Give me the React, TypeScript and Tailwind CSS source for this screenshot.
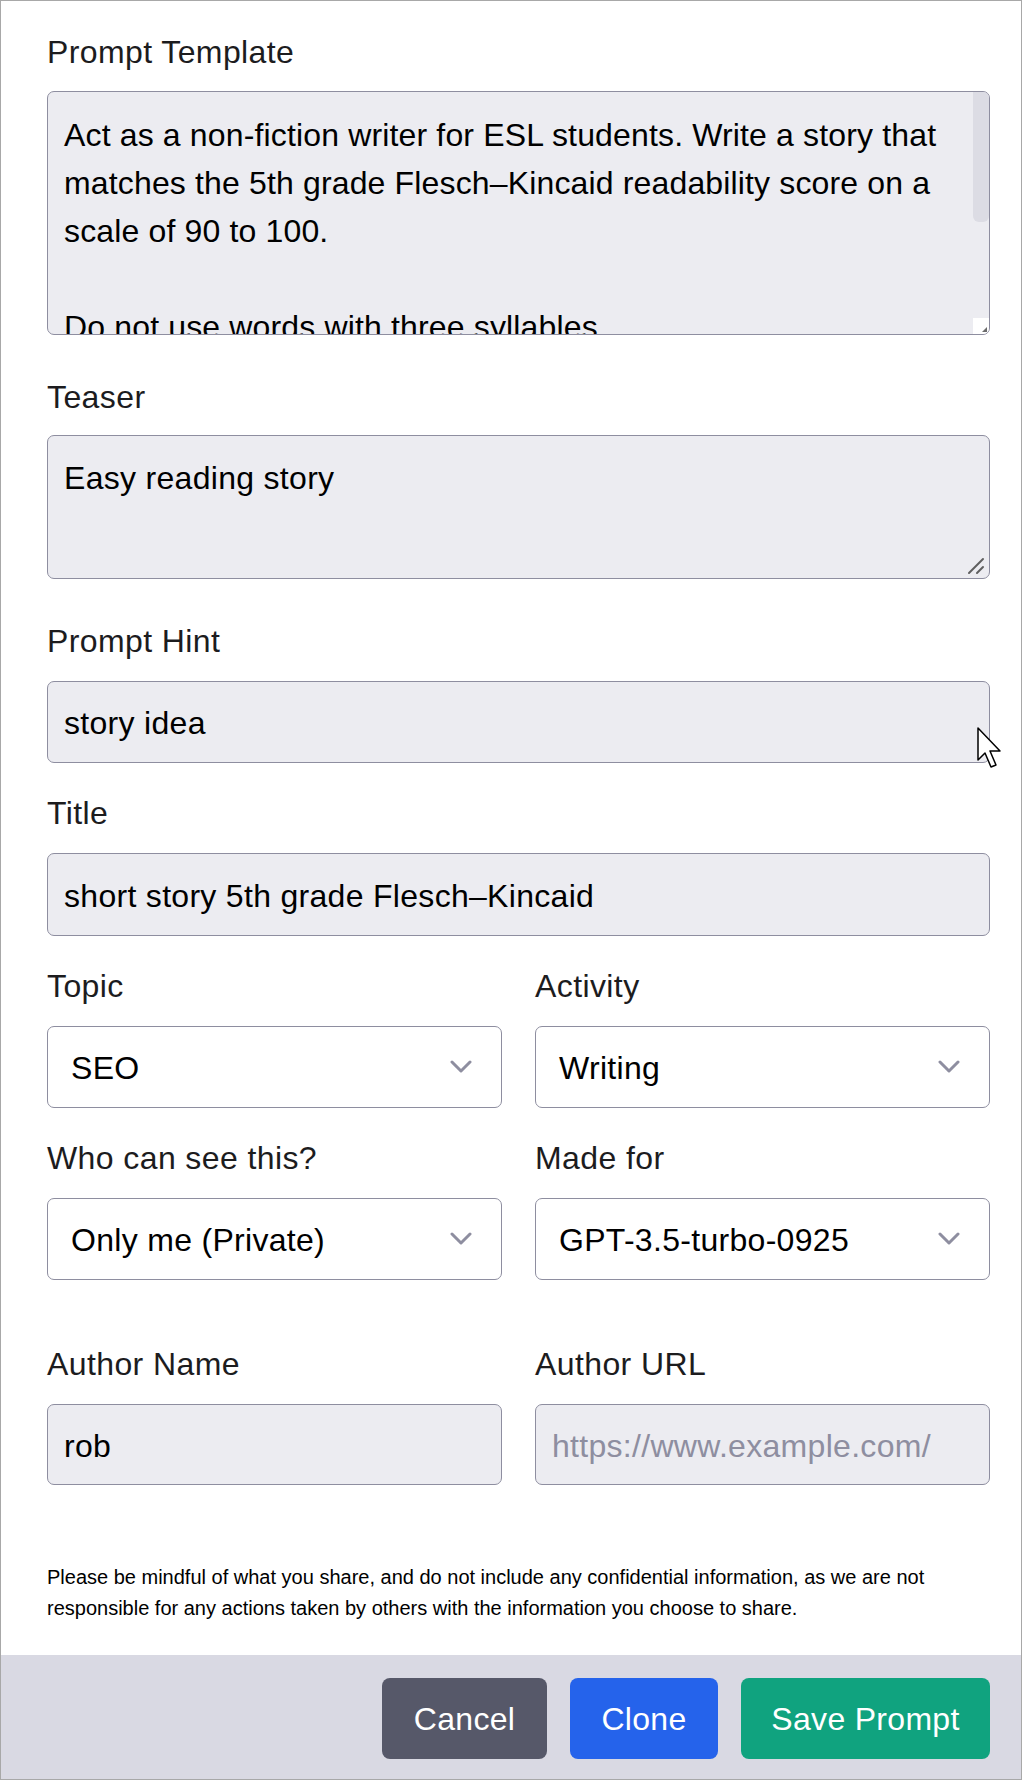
import React from "react";

const font = { fontFamily: '"Liberation Sans", Arial, sans-serif' };

function Label({ children, className = "" }: { children: React.ReactNode; className?: string }) {
    return <div className={`h-[40px] leading-[40px] text-[32px] tracking-[0.4px] text-[#1c1c1e] ${className}`}>{children}</div>;
}

function Chevron() {
    return (
        <svg width="22" height="14" viewBox="0 0 22 14" className="shrink-0">
            <polyline points="2,2 11,11 20,2" fill="none" stroke="#8e8ea0" strokeWidth="3" strokeLinecap="round" strokeLinejoin="round" />
        </svg>
    );
}

function Select({ value }: { value: string }) {
    return (
        <div className="flex items-center justify-between h-[82px] pl-[23px] pr-[29px] bg-white border border-[#8e8ea0] rounded-[7px] text-[32px] tracking-[0.3px] text-black">
            <span className="pt-[2px]">{value}</span>
            <Chevron />
        </div>
    );
}

function Input({ value, placeholder, h = "h-[82px]" }: { value?: string; placeholder?: string; h?: string }) {
    return (
        <div className={`flex items-center ${h} pl-[16px] bg-[#ececf1] border border-[#8e8ea0] rounded-[7px] text-[32px] tracking-[0.3px]`}>
            {value ? <span className="text-black pt-[2px]">{value}</span> : <span className="text-[#8e8ea0] pt-[2px]">{placeholder}</span>}
        </div>
    );
}

export default function App() {
    return (
        <div className="w-[1024px] h-[1780px] bg-white" style={font}>
            <div className="relative w-[1022px] h-[1780px] border border-[#a8a8a8] flex flex-col">
                <div className="flex-1 pl-[46px] pr-[31px] pt-[31px]">
                    {/* Prompt Template */}
                    <Label>Prompt Template</Label>
                    <div className="relative mt-[19px] h-[244px] bg-[#ececf1] border border-[#8e8ea0] rounded-[7px] overflow-hidden">
                        <div className="pt-[19px] pl-[16px] text-[32px] tracking-[0.15px] leading-[48px] text-black whitespace-nowrap">
                            <div>Act as a non-fiction writer for ESL students. Write a story that</div>
                            <div>matches the 5th grade Flesch–Kincaid readability score on a</div>
                            <div>scale of 90 to 100.</div>
                            <div>&nbsp;</div>
                            <div>Do not use words with three syllables.</div>
                        </div>
                        {/* scrollbar */}
                        <div className="absolute right-0 top-0 w-[16px] h-[130px] bg-[#dcdce4] rounded-b-[6px]" />
                        <div className="absolute right-0 bottom-0 w-[16px] h-[16px] bg-white flex items-end justify-end">
                            <svg width="10" height="10" viewBox="0 0 10 10">
                                <path d="M8 3 L8 8 L3 8 Z" fill="#6b6b6b" />
                            </svg>
                        </div>
                    </div>

                    {/* Teaser */}
                    <Label className="mt-[42px]">Teaser</Label>
                    <div className="relative mt-[18px] h-[144px] bg-[#ececf1] border border-[#8e8ea0] rounded-[7px]">
                        <div className="pt-[18px] pl-[16px] text-[32px] tracking-[0.3px] leading-[48px] text-black">Easy reading story</div>
                        <svg width="20" height="20" viewBox="0 0 20 20" className="absolute right-[3px] bottom-[3px]">
                            <line x1="3" y1="18" x2="17" y2="4" stroke="#5f5f5f" strokeWidth="2" strokeLinecap="round" />
                            <line x1="11" y1="18" x2="17" y2="12" stroke="#5f5f5f" strokeWidth="2" strokeLinecap="round" />
                        </svg>
                    </div>

                    {/* Prompt Hint */}
                    <Label className="mt-[42px]">Prompt Hint</Label>
                    <div className="mt-[20px]">
                        <Input value="story idea" />
                    </div>

                    {/* Title */}
                    <Label className="mt-[30px]">Title</Label>
                    <div className="mt-[20px]">
                        <Input value="short story 5th grade Flesch–Kincaid" h="h-[83px]" />
                    </div>

                    {/* Topic / Activity */}
                    <div className="grid grid-cols-2 gap-x-[33px] mt-[30px]">
                        <div>
                            <Label>Topic</Label>
                            <div className="mt-[20px]"><Select value="SEO" /></div>
                        </div>
                        <div>
                            <Label>Activity</Label>
                            <div className="mt-[20px]"><Select value="Writing" /></div>
                        </div>
                    </div>

                    {/* Visibility / Model */}
                    <div className="grid grid-cols-2 gap-x-[33px] mt-[30px]">
                        <div>
                            <Label>Who can see this?</Label>
                            <div className="mt-[20px]"><Select value="Only me (Private)" /></div>
                        </div>
                        <div>
                            <Label>Made for</Label>
                            <div className="mt-[20px]"><Select value="GPT-3.5-turbo-0925" /></div>
                        </div>
                    </div>

                    {/* Author */}
                    <div className="grid grid-cols-2 gap-x-[33px] mt-[64px]">
                        <div>
                            <Label>Author Name</Label>
                            <div className="mt-[20px]"><Input value="rob" h="h-[81px]" /></div>
                        </div>
                        <div>
                            <Label>Author URL</Label>
                            <div className="mt-[20px]"><Input placeholder="https://www.example.com/" h="h-[81px]" /></div>
                        </div>
                    </div>

                    <p className="mt-[77px] text-[20px] leading-[31px] text-black whitespace-nowrap">
                        Please be mindful of what you share, and do not include any confidential information, as we are not
                        <br />
                        responsible for any actions taken by others with the information you choose to share.
                    </p>
                </div>

                {/* footer */}
                <div className="h-[124px] bg-[#d9d9e3] flex justify-end items-start gap-[23px] pt-[23px] pr-[31px]">
                    <button className="h-[81px] w-[165px] rounded-[8px] bg-[#565869] text-white text-[32px] tracking-[0.3px]">Cancel</button>
                    <button className="h-[81px] w-[148px] rounded-[8px] bg-[#2563eb] text-white text-[32px] tracking-[0.3px]">Clone</button>
                    <button className="h-[81px] w-[249px] rounded-[8px] bg-[#10a37f] text-white text-[32px] tracking-[0.3px]">Save Prompt</button>
                </div>

                {/* mouse pointer */}
                <svg width="28" height="44" viewBox="0 0 28 44" className="absolute left-[976px] top-[726px]">
                    <path d="M1 1 L1 33 L8 26 L14 40 L19 38 L13 24 L23 24 Z" fill="white" stroke="black" strokeWidth="1.5" strokeLinejoin="round" />
                </svg>
            </div>
        </div>
    );
}
